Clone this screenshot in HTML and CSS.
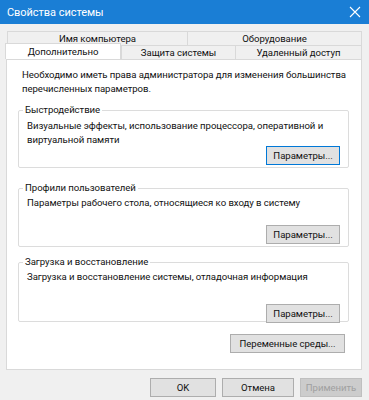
FILE: index.html
```html
<!DOCTYPE html>
<html lang="ru">
<head>
<meta charset="utf-8">
<link rel="stylesheet" href="styles.css">
</head>
<body>
<div class="window">
  <div class="titlebar">
    <span class="title">Свойства системы</span>
    <svg class="close" width="12" height="12" viewBox="0 0 12 12"><path d="M1 1L11 11M11 1L1 11" stroke="#fff" stroke-width="1.1" fill="none"/></svg>
  </div>
  <div class="content">
    <div class="tabrow top">
      <div class="tab w1">Имя компьютера</div>
      <div class="tab w2">Оборудование</div>
    </div>
    <div class="tabrow bottom">
      <div class="tab active">Дополнительно</div>
      <div class="tab w3">Защита системы</div>
      <div class="tab w4">Удаленный доступ</div>
    </div>
    <div class="panel">
      <p class="intro">Необходимо иметь права администратора для изменения большинства перечисленных параметров.</p>
      <fieldset class="group g1">
        <legend>Быстродействие</legend>
        <p class="desc">Визуальные эффекты, использование процессора, оперативной и виртуальной памяти</p>
        <div class="btnrow"><button class="btn focus">Параметры...</button></div>
      </fieldset>
      <fieldset class="group g2">
        <legend>Профили пользователей</legend>
        <p class="desc">Параметры рабочего стола, относящиеся ко входу в систему</p>
        <div class="btnrow"><button class="btn">Параметры...</button></div>
      </fieldset>
      <fieldset class="group g3">
        <legend>Загрузка и восстановление</legend>
        <p class="desc">Загрузка и восстановление системы, отладочная информация</p>
        <div class="btnrow"><button class="btn">Параметры...</button></div>
      </fieldset>
      <div class="envrow"><button class="btn env">Переменные среды...</button></div>
    </div>
    <div class="footer">
      <button class="btn dlg ok">OK</button>
      <button class="btn dlg cancel">Отмена</button>
      <button class="btn dlg disabled">Применить</button>
    </div>
  </div>
</div>
</body>
</html>
```
FILE: styles.css
```css
* { box-sizing: border-box; }
html, body { margin: 0; padding: 0; }
body {
  width: 369px;
  height: 400px;
  background: #f0f0f0;
  font-family: Roboto, "Noto Sans", sans-serif;
  font-size: 9.6px;
  letter-spacing: -0.05px;
  color: #111;
  overflow: hidden;
}
.titlebar {
  height: 24px;
  background: #1a7ed5;
  display: flex;
  align-items: center;
  justify-content: space-between;
  padding: 0 7px 0 7px;
  color: #fff;
}
.title { font-size: 11px; }
.close { margin-right: 1px; }
.content { padding: 7px 7px 0 6px; }
.tabrow { display: flex; height: 14px; }
.tabrow.top { margin-left: 1px; }
.tab {
  background: #f0f0f0;
  border: 1px solid #d9d9d9;
  border-bottom: none;
  display: flex;
  align-items: center;
  justify-content: center;
  line-height: 1;
}
.tab + .tab { border-left: none; }
.w1 { width: 181px; }
.w2 { width: 174px; }
.w3 { width: 115px; }
.w4 { width: 126px; }
.tabrow.bottom { position: relative; z-index: 1; }
.tab.active {
  width: 116px;
  height: 16px;
  margin: -2px 0 -1px -1px;
  background: #fff;
  border-color: #d9d9d9;
}
.tab.active + .tab { border-left: 1px solid #d9d9d9; }
.panel {
  height: 311px;
  background: #fff;
  border: 1px solid #d9d9d9;
  padding: 8px 14px 0 14px;
}
.intro { margin: 0 0 0 1px; line-height: 14px; }
.group {
  margin: 8px 0 0 -3px;
  border: 1px solid #dcdcdc;
  border-radius: 2px;
  padding: 0 8px 3px 8px;
  width: 331px;
}
.group legend { padding: 0 2px; margin-left: -4px; line-height: 12px; }
.desc { margin: 3px 0 0 0; line-height: 14px; }
.g1 { height: 64px; }
.g2 { height: 65px; margin-top: 14px; }
.g3 { height: 66px; margin-top: 9px; }
.g2 .desc, .g3 .desc { margin-top: 2px; }
.g1 .btnrow { margin-top: -1px; }
.g2 .btnrow { margin-top: 15px; }
.g3 .btnrow { margin-top: 20px; }
.btnrow { display: flex; justify-content: flex-end; }
.btn {
  font-family: inherit;
  font-size: 9.6px;
  letter-spacing: -0.05px;
  color: #111;
  background: #e1e1e1;
  border: 1px solid #adadad;
  height: 19px;
  padding: 0;
  line-height: 1;
}
.group .btn { width: 74px; }
.btn.focus { border: 1px solid #0078d7; }
.envrow { display: flex; justify-content: flex-end; margin-top: 12px; margin-right: 2px; }
.btn.env { width: 115px; }
.footer { display: flex; justify-content: flex-end; gap: 6px; margin-top: 8px; }
.btn.ok { width: 66px; }
.btn.cancel { width: 72px; }
.btn.disabled { width: 62px; background: #cccccc; border-color: #bfbfbf; color: #a0a0a0; }
```
